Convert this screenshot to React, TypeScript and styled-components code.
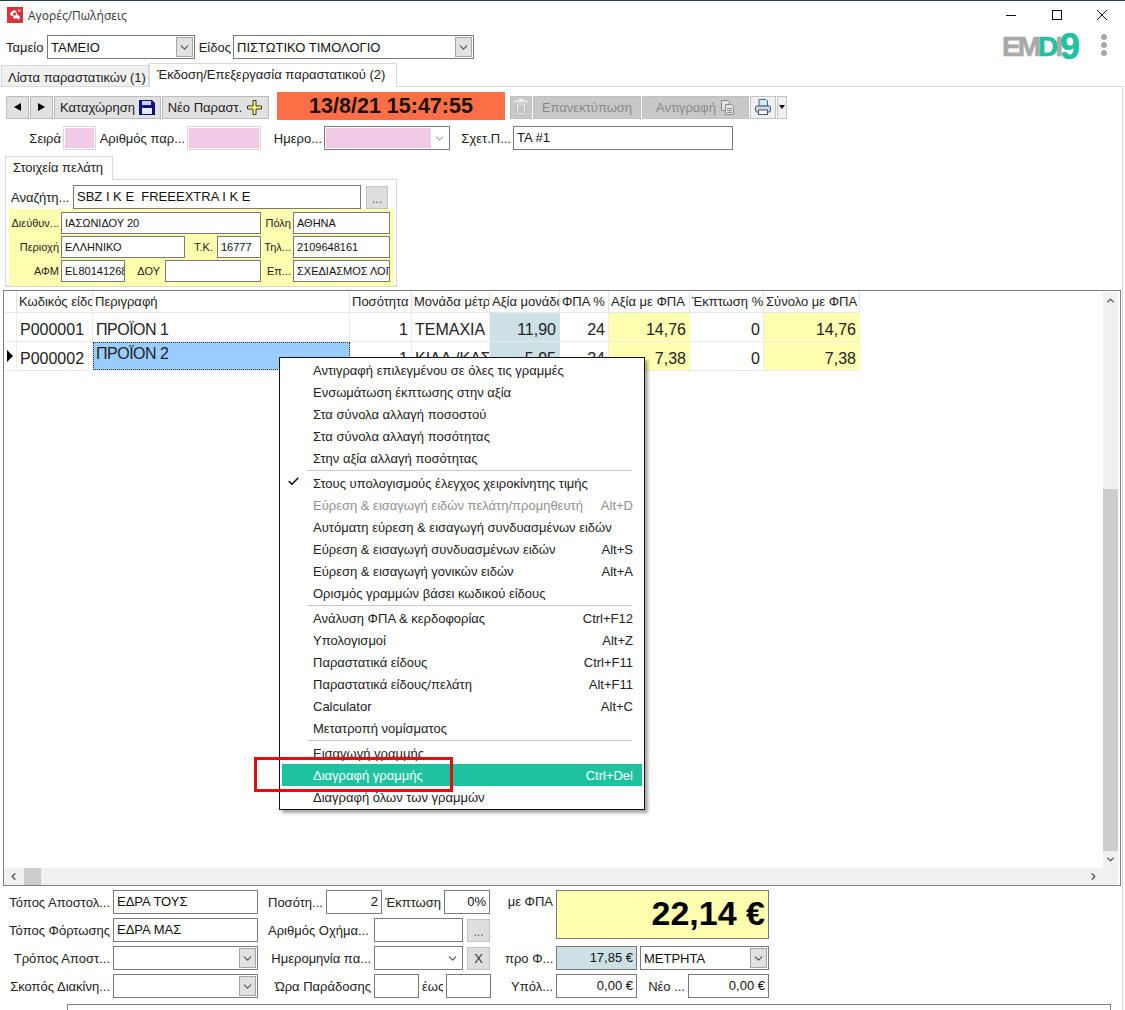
import React from 'react';
import styled, { createGlobalStyle } from 'styled-components';
import { ChevronDown, ChevronLeft, ChevronRight, ChevronUp, Check } from 'lucide-react';

const GlobalStyle = createGlobalStyle`
    html, body {
        margin: 0;
        padding: 0;
        background: #fff;
    }
    * {
        box-sizing: border-box;
    }
`;

const Root = styled.div`
    width: 1125px;
    height: 1010px;
    position: relative;
    overflow: hidden;
    background: #fff;
    border-top: 1px solid #1d4657;
    font-family: "Liberation Sans", Arial, sans-serif;
    font-size: 13px;
    color: #111;
    display: flex;
    flex-direction: column;
`;

const TitleBar = styled.div`
    height: 30px;
    flex: none;
    display: flex;
    align-items: center;
    padding: 0 0 2px 7px;
    gap: 5px;
    font-family: "Open Sans", sans-serif;
    font-size: 12px;
    color: #333;
`;

const WindowButtons = styled.div`
    margin-left: auto;
    display: flex;
    width: 120px;
    padding-right: 17px;
    justify-content: space-between;
    align-items: center;
`;

const TopRow = styled.div`
    height: 24px;
    flex: none;
    margin-top: 4px;
    padding-left: 6px;
    display: flex;
    align-items: center;
    gap: 2px;
`;

const Label = styled.div<{ $w?: number; $size?: number; $left?: boolean; $mr?: number }>`
    flex: none;
    width: ${p => (p.$w ? `${p.$w}px` : 'auto')};
    margin-right: ${p => p.$mr ?? 0}px;
    font-size: ${p => p.$size ?? 13}px;
    text-align: ${p => (p.$left ? 'left' : 'right')};
    white-space: nowrap;
    overflow: hidden;
    color: #222;
`;

const Box = styled.div<{ $w: number; $h?: number; $bg?: string; $size?: number; $right?: boolean }>`
    flex: none;
    width: ${p => p.$w}px;
    height: ${p => p.$h ?? 24}px;
    border: 1px solid #7a7a7a;
    background: ${p => p.$bg ?? '#fff'};
    font-size: ${p => p.$size ?? 13}px;
    line-height: ${p => (p.$h ?? 24) - 6}px;
    padding: 2px 3px 0;
    text-align: ${p => (p.$right ? 'right' : 'left')};
    white-space: pre;
    overflow: hidden;
    color: #111;
`;

const PinkBox = styled.div<{ $w: number }>`
    flex: none;
    width: ${p => p.$w}px;
    height: 24px;
    border: 1px solid #d9d9d9;
    background: #f3c9e8;
    box-shadow: inset 0 0 0 1px #fff;
`;

const Combo = styled.div<{ $w: number }>`
    flex: none;
    width: ${p => p.$w}px;
    height: 24px;
    border: 1px solid #7a7a7a;
    background: #fff;
    display: flex;
    align-items: stretch;
    padding: 1px;
    font-size: 13px;
    line-height: 22px;
    white-space: nowrap;
    overflow: hidden;
`;

const ComboText = styled.div<{ $bg?: string }>`
    flex: 1;
    padding-left: 2px;
    background: ${p => p.$bg ?? 'transparent'};
`;

const ComboButton = styled.div<{ $flat?: boolean }>`
    flex: none;
    width: 17px;
    display: flex;
    align-items: center;
    justify-content: center;
    background: ${p => (p.$flat ? 'transparent' : '#e1e1e1')};
    border: 1px solid ${p => (p.$flat ? 'transparent' : '#a6a6a6')};
    color: #555;
`;

const Logo = styled.div`
    margin-left: auto;
    width: 77px;
    margin-right: 20px;
    font-family: "Liberation Sans", Arial, sans-serif;
    font-weight: 700;
    font-size: 28px;
    letter-spacing: -3px;
    line-height: 24px;
    color: #a9a9a9;
    -webkit-text-stroke: 0.6px #a9a9a9;
    white-space: nowrap;
`;

const LogoD = styled.span`
    color: #1fc2a0;
    -webkit-text-stroke: 0.6px #1fc2a0;
`;

const LogoNine = styled.span`
    color: #1fc2a0;
    -webkit-text-stroke: 0.6px #1fc2a0;
    font-size: 36px;
    letter-spacing: 0;
    vertical-align: -3px;
`;

const Dots = styled.div`
    margin: 0 18px 4px 0;
    display: flex;
    flex-direction: column;
    gap: 2px;
`;

const Dot = styled.div`
    width: 6px;
    height: 6px;
    border-radius: 50%;
    background: #a6a6a6;
`;

const TabStrip = styled.div`
    height: 24px;
    flex: none;
    margin-top: 4px;
    display: flex;
    align-items: flex-end;
    padding-left: 1px;
    position: relative;
    z-index: 1;
    margin-bottom: -1px;
`;

const Tab = styled.div<{ $active?: boolean; $w: number }>`
    width: ${p => p.$w}px;
    height: ${p => (p.$active ? 24 : 22)}px;
    border: 1px solid #d9d9d9;
    border-bottom: ${p => (p.$active ? 'none' : '1px solid #d9d9d9')};
    background: ${p => (p.$active ? '#fff' : '#f0f0f0')};
    padding: ${p => (p.$active ? '3px 0 0 7px' : '4px 0 0 6px')};
    font-size: 13px;
    white-space: nowrap;
    color: #222;
`;

const Page = styled.div`
    flex: 1;
    width: 1123px;
    border: 1px solid #d9d9d9;
    border-left: none;
    border-bottom: none;
    display: flex;
    flex-direction: column;
`;

const Toolbar = styled.div`
    height: 28px;
    flex: none;
    margin-top: 5px;
    padding-left: 6px;
    display: flex;
    align-items: center;
    gap: 1px;
`;

const ToolButton = styled.div<{ $w: number; $off?: boolean }>`
    flex: none;
    width: ${p => p.$w}px;
    height: 23px;
    margin-top: 2px;
    background: ${p => (p.$off ? '#c8c8c8' : '#e1e1e1')};
    border: 1px solid ${p => (p.$off ? '#c0c0c0' : '#bcbcbc')};
    color: ${p => (p.$off ? '#8a8a8a' : '#222')};
    display: flex;
    align-items: center;
    justify-content: center;
    gap: 4px;
    font-size: 13px;
    white-space: nowrap;
`;

const PrintButton = styled(ToolButton)`
    background: #f0f0f0;
    border-color: #c4c4c4;
`;

const Triangle = styled.div<{ $dir: 'left' | 'right' | 'down' }>`
    width: 0;
    height: 0;
    ${p =>
        p.$dir === 'left'
            ? 'border-top: 4px solid transparent; border-bottom: 4px solid transparent; border-right: 7px solid #000;'
            : p.$dir === 'right'
            ? 'border-top: 4px solid transparent; border-bottom: 4px solid transparent; border-left: 7px solid #000;'
            : 'border-left: 3px solid transparent; border-right: 3px solid transparent; border-top: 4px solid #000;'}
`;

const RowPointer = styled.div`
    width: 0;
    height: 0;
    border-top: 6px solid transparent;
    border-bottom: 6px solid transparent;
    border-left: 6px solid #000;
`;

const DateBanner = styled.div`
    flex: none;
    width: 228px;
    height: 28px;
    margin: 0 4px 0 7px;
    background: #ff6f47;
    color: #1a1208;
    font-size: 21.5px;
    font-weight: 700;
    line-height: 28px;
    text-align: center;
`;

const DocRow = styled.div`
    height: 24px;
    flex: none;
    margin-top: 6px;
    display: flex;
    align-items: center;
    gap: 2px;
    padding-left: 29px;
`;

const CustomerTab = styled.div`
    flex: none;
    width: 108px;
    height: 24px;
    margin: 6px 0 -1px 5px;
    border: 1px solid #d9d9d9;
    border-bottom: none;
    background: #fff;
    padding: 3px 0 0 7px;
    position: relative;
    z-index: 1;
    color: #222;
`;

const CustomerPanel = styled.div`
    flex: none;
    width: 392px;
    height: 108px;
    margin-left: 5px;
    border: 1px solid #d9d9d9;
    border-bottom-width: 2px;
    padding: 5px 2px 0 3px;
`;

const SearchRow = styled.div`
    display: flex;
    align-items: center;
    height: 24px;
    padding-left: 2px;
`;

const DotsButton = styled.div<{ $w: number; $ml?: number }>`
    flex: none;
    width: ${p => p.$w}px;
    height: 23px;
    margin-left: ${p => p.$ml ?? 5}px;
    background: #dedede;
    border: 1px solid #c2c2c2;
    color: #555;
    text-align: center;
    font-size: 12px;
    line-height: 24px;
`;

const ClearButton = styled(DotsButton)`
    color: #333;
    font-size: 13px;
    line-height: 22px;
`;

const YellowArea = styled.div`
    height: 77px;
    background: #ffffb0;
    padding-top: 3px;
    display: flex;
    flex-direction: column;
    gap: 3px;
`;

const CustomerRow = styled.div`
    height: 21px;
    display: flex;
    align-items: center;
    gap: 2px;
`;

const GridBox = styled.div`
    flex: none;
    margin: 3px 0 0 3px;
    width: 1118px;
    height: 596px;
    border: 1px solid #808080;
    display: grid;
    grid-template-columns: 1fr 17px;
    grid-template-rows: 1fr 17px;
`;

const GridArea = styled.div`
    overflow: hidden;
    background: #fff;
`;

const Columns = '13px 76px 257px 62px 78px 70px 49px 81px 74px 96px';

const HeaderRow = styled.div`
    display: grid;
    grid-template-columns: ${Columns};
    height: 22px;
    width: 856px;
    border-bottom: 1px solid #e8e8e8;
`;

const HeadCell = styled.div`
    border-right: 1px solid #e4e4e4;
    padding: 4px 0 0 2px;
    font-size: 13px;
    line-height: 14px;
    white-space: nowrap;
    overflow: hidden;
    color: #222;
`;

const DataRow = styled.div`
    display: grid;
    grid-template-columns: ${Columns};
    height: 29px;
    width: 856px;
    border-bottom: 1px solid #ececec;
`;

const Cell = styled.div<{ $bg?: string; $right?: boolean }>`
    background: ${p => p.$bg ?? '#fff'};
    border-right: 1px solid ${p => p.$bg ?? '#ececec'};
    text-align: ${p => (p.$right ? 'right' : 'left')};
    padding: 7px 3px 0 3px;
    font-size: 16px;
    line-height: 20px;
    white-space: nowrap;
    overflow: hidden;
    color: #222;
`;

const DescCell = styled(Cell)`
    letter-spacing: -0.5px;
`;

const SelectedCell = styled(DescCell)`
    background: #99ccff;
    border: 1px dotted #333;
    padding: 1px 2px 0 2px;
`;

const RowMark = styled.div`
    border-right: 1px solid #ececec;
    display: flex;
    align-items: center;
    padding-left: 3px;
`;

const ScrollV = styled.div`
    background: #f0f0f0;
    margin: 1px 2px 0 0;
    display: flex;
    flex-direction: column;
    align-items: center;
    color: #555;
`;

const ArrowCap = styled.div`
    flex: none;
    height: 17px;
    display: flex;
    align-items: center;
    justify-content: center;
`;

const ScrollSpace = styled.div<{ $h: number }>`
    flex: none;
    height: ${p => p.$h}px;
`;

const ScrollThumbV = styled.div`
    flex: 1;
    width: 100%;
    background: #cdcdcd;
`;

const ScrollH = styled.div`
    background: #f0f0f0;
    display: flex;
    align-items: center;
    color: #555;
`;

const ScrollThumbH = styled.div`
    width: 17px;
    height: 100%;
    margin-left: 1px;
    background: #cdcdcd;
`;

const ArrowEnd = styled.div`
    margin-left: auto;
    width: 20px;
    display: flex;
    justify-content: center;
`;

const ArrowStart = styled.div`
    width: 19px;
    display: flex;
    justify-content: center;
`;

const ScrollCorner = styled.div`
    background: #f0f0f0;
    margin-right: 2px;
`;

const Footer = styled.div`
    flex: none;
    margin-top: 4px;
    display: flex;
    align-items: flex-start;
`;

const FootColumn = styled.div<{ $w: number }>`
    flex: none;
    width: ${p => p.$w}px;
    display: flex;
    flex-direction: column;
    gap: 4px;
`;

const FootRow = styled.div`
    height: 24px;
    display: flex;
    align-items: center;
    gap: 3px;
`;

const TotalRow = styled.div`
    height: 52px;
    display: flex;
    align-items: flex-start;
    gap: 3px;
`;

const TotalBox = styled.div`
    width: 213px;
    height: 49px;
    border: 1px solid #7a7a7a;
    background: #ffffb0;
    color: #000;
    font-size: 34px;
    font-weight: 700;
    line-height: 44px;
    text-align: right;
    padding-right: 3px;
    white-space: nowrap;
`;

const TotalLabel = styled(Label)`
    padding-top: 4px;
`;

const NotesBox = styled.div`
    flex: none;
    width: 1044px;
    height: 20px;
    margin: 6px 0 0 67px;
    border: 1px solid #808080;
`;

const Menu = styled.div`
    position: absolute;
    left: 279px;
    top: 356px;
    width: 366px;
    height: 453px;
    background: #fff;
    border: 1px solid #111;
    box-shadow: 3px 3px 3px rgba(0, 0, 0, 0.35);
    padding: 1px 2px;
    z-index: 5;
`;

const MenuItem = styled.div<{ $off?: boolean; $active?: boolean }>`
    height: 22px;
    position: relative;
    padding: 0 9px 0 31px;
    display: flex;
    justify-content: space-between;
    align-items: center;
    font-size: 13px;
    white-space: nowrap;
    background: ${p => (p.$active ? '#1fc2a0' : 'transparent')};
    color: ${p => (p.$active ? '#fff' : p.$off ? '#8f8f8f' : '#222')};
`;

const MenuSeparator = styled.div`
    height: 1px;
    margin: 1px 10px 1px 25px;
    background: #c8c8c8;
`;

const MenuCheck = styled.span`
    position: absolute;
    left: 5px;
    top: 3px;
    display: flex;
    color: #111;
`;

const RedFrame = styled.div`
    position: absolute;
    left: 254px;
    top: 756px;
    width: 199px;
    height: 35px;
    border: 3px solid #e01010;
    z-index: 6;
`;

type MenuEntry = { text?: string; key?: string; off?: boolean; active?: boolean; check?: boolean };

const menuItems: MenuEntry[] = [
    { text: 'Αντιγραφή επιλεγμένου σε όλες τις γραμμές' },
    { text: 'Ενσωμάτωση έκπτωσης στην αξία' },
    { text: 'Στα σύνολα αλλαγή ποσοστού' },
    { text: 'Στα σύνολα αλλαγή ποσότητας' },
    { text: 'Στην αξία αλλαγή ποσότητας' },
    {},
    { text: 'Στους υπολογισμούς έλεγχος χειροκίνητης τιμής', check: true },
    { text: 'Εύρεση & εισαγωγή ειδών πελάτη/προμηθευτή', key: 'Alt+D', off: true },
    { text: 'Αυτόματη εύρεση & εισαγωγή συνδυασμένων ειδών' },
    { text: 'Εύρεση & εισαγωγή συνδυασμένων ειδών', key: 'Alt+S' },
    { text: 'Εύρεση & εισαγωγή γονικών ειδών', key: 'Alt+A' },
    { text: 'Ορισμός γραμμών βάσει κωδικού είδους' },
    {},
    { text: 'Ανάλυση ΦΠΑ & κερδοφορίας', key: 'Ctrl+F12' },
    { text: 'Υπολογισμοί', key: 'Alt+Z' },
    { text: 'Παραστατικά είδους', key: 'Ctrl+F11' },
    { text: 'Παραστατικά είδους/πελάτη', key: 'Alt+F11' },
    { text: 'Calculator', key: 'Alt+C' },
    { text: 'Μετατροπή νομίσματος' },
    {},
    { text: 'Εισαγωγή γραμμής' },
    { text: 'Διαγραφή γραμμής', key: 'Ctrl+Del', active: true },
    { text: 'Διαγραφή όλων των γραμμών' },
];

const headers = ['Κωδικός είδους', 'Περιγραφή', 'Ποσότητα', 'Μονάδα μέτρησης', 'Αξία μονάδας', 'ΦΠΑ %', 'Αξία με ΦΠΑ', 'Έκπτωση %', 'Σύνολο με ΦΠΑ'];

const YELLOW = '#ffffb0';
const STEEL = '#cde0e6';

function AppIcon() {
    return (
        <svg width="16" height="16" viewBox="0 0 16 16">
            <rect width="16" height="16" fill="#d9343a" />
            <path d="M3 6l4-3 2 1 1 3 3 3-1 3-3-2-2 1-1-3-3-1z" fill="#fff" />
            <circle cx="7.5" cy="7" r="1.6" fill="#d9343a" />
            <path d="M11 3l2 2M12 2.5l1.5 1.5" stroke="#fff" />
        </svg>
    );
}

function SaveIcon() {
    return (
        <svg width="16" height="16" viewBox="0 0 16 16">
            <path d="M0 1h13l3 3v12H0z" fill="#10107a" />
            <rect x="3" y="2" width="9" height="4" fill="#c8d4f4" />
            <rect x="3" y="9" width="10" height="6" fill="#e8ecfa" />
        </svg>
    );
}

function PlusIcon() {
    return (
        <svg width="17" height="17" viewBox="0 0 17 17">
            <path d="M7 1.5h3v5.5h5.5v3H10v5.5H7V10H1.5V7H7z" fill="#ffff70" stroke="#333" strokeWidth="1" />
        </svg>
    );
}

function TrashIcon() {
    return (
        <svg width="16" height="18" viewBox="0 0 16 18">
            <path d="M6 1.5h4M1.5 3.5h13" stroke="#eee" strokeWidth="2" />
            <path d="M3 5h10l-1 12H4z" fill="#eee" stroke="#9a9a9a" strokeWidth="0.6" />
            <path d="M6 6.5v9M8 6.5v9M10 6.5v9" stroke="#9a9a9a" />
        </svg>
    );
}

function CopyIcon() {
    return (
        <svg width="15" height="16" viewBox="0 0 15 16" fill="#e4e4e4" stroke="#8c8c8c">
            <path d="M1.5 1.5h6l2 2v8h-8z" />
            <path d="M5.5 5.5h6l2 2v8h-8z" />
            <path d="M7 9.5h5M7 11.5h5M7 13.5h5" />
        </svg>
    );
}

function PrinterIcon() {
    return (
        <svg width="18" height="18" viewBox="0 0 18 18">
            <path d="M5 8V1.5h7l1.5 1.5v5z" fill="#d8e8f8" stroke="#3f6c9c" />
            <rect x="1.5" y="8" width="15" height="6" rx="1.5" fill="#cfd6e0" stroke="#46586e" />
            <rect x="4.5" y="12" width="9" height="4.5" fill="#fff" stroke="#46586e" />
        </svg>
    );
}

function App() {
    return (
        <Root>
            <GlobalStyle />
            <TitleBar>
                <AppIcon />
                Αγορές/Πωλήσεις
                <WindowButtons>
                    <svg width="12" height="12" viewBox="0 0 12 12"><path d="M1 6.5h10" stroke="#111" /></svg>
                    <svg width="12" height="12" viewBox="0 0 12 12"><rect x="1.5" y="1.5" width="9" height="9" fill="none" stroke="#111" /></svg>
                    <svg width="12" height="12" viewBox="0 0 12 12"><path d="M1 1l10 10M11 1L1 11" stroke="#111" /></svg>
                </WindowButtons>
            </TitleBar>

            <TopRow>
                <Label $w={39} $left>Ταμείο</Label>
                <Combo $w={148}>
                    <ComboText>ΤΑΜΕΙΟ</ComboText>
                    <ComboButton><ChevronDown size={13} /></ComboButton>
                </Combo>
                <Label $w={34}>Είδος</Label>
                <Combo $w={241}>
                    <ComboText>ΠΙΣΤΩΤΙΚΟ ΤΙΜΟΛΟΓΙΟ</ComboText>
                    <ComboButton><ChevronDown size={13} /></ComboButton>
                </Combo>
                <Logo>EM<LogoD>D</LogoD>I<LogoNine>9</LogoNine></Logo>
                <Dots><Dot /><Dot /><Dot /></Dots>
            </TopRow>

            <TabStrip>
                <Tab $w={148}>Λίστα παραστατικών (1)</Tab>
                <Tab $w={248} $active>Έκδοση/Επεξεργασία παραστατικού (2)</Tab>
            </TabStrip>

            <Page>
                <Toolbar>
                    <ToolButton $w={23}><Triangle $dir="left" /></ToolButton>
                    <ToolButton $w={23}><Triangle $dir="right" /></ToolButton>
                    <ToolButton $w={107}>Καταχώρηση <SaveIcon /></ToolButton>
                    <ToolButton $w={107}>Νέο Παραστ. <PlusIcon /></ToolButton>
                    <DateBanner>13/8/21 15:47:55</DateBanner>
                    <ToolButton $w={22} $off><TrashIcon /></ToolButton>
                    <ToolButton $w={108} $off>Επανεκτύπωση</ToolButton>
                    <ToolButton $w={107} $off>Αντιγραφή <CopyIcon /></ToolButton>
                    <PrintButton $w={26}><PrinterIcon /></PrintButton>
                    <PrintButton $w={10}><Triangle $dir="down" /></PrintButton>
                </Toolbar>

                <DocRow>
                    <Label $w={32}>Σειρά</Label>
                    <PinkBox $w={33} />
                    <Label $w={87}>Αριθμός παρ...</Label>
                    <PinkBox $w={74} />
                    <Label $w={59}>Ημερο...</Label>
                    <Combo $w={126}>
                        <ComboText $bg="#f3c9e8" />
                        <ComboButton $flat><ChevronDown size={13} color="#aaa" /></ComboButton>
                    </Combo>
                    <Label $w={59}>Σχετ.Π...</Label>
                    <Box $w={220}>ΤΑ #1</Box>
                </DocRow>

                <CustomerTab>Στοιχεία πελάτη</CustomerTab>
                <CustomerPanel>
                    <SearchRow>
                        <Label $w={62} $left>Αναζήτη...</Label>
                        <Box $w={288}>SBZ I K E  FREEEXTRA I K E</Box>
                        <DotsButton $w={22}>...</DotsButton>
                    </SearchRow>
                    <YellowArea>
                        <CustomerRow>
                            <Label $w={50} $size={11}>Διεύθυν...</Label>
                            <Box $w={200} $h={22} $size={11}>ΙΑΣΩΝΙΔΟΥ 20</Box>
                            <Label $w={28} $size={11}>Πόλη</Label>
                            <Box $w={97} $h={22} $size={11}>ΑΘΗΝΑ</Box>
                        </CustomerRow>
                        <CustomerRow>
                            <Label $w={50} $size={11}>Περιοχή</Label>
                            <Box $w={124} $h={22} $size={11}>ΕΛΛΗΝΙΚΟ</Box>
                            <Label $w={26} $mr={2} $size={11}>Τ.Κ.</Label>
                            <Box $w={44} $h={22} $size={11}>16777</Box>
                            <Label $w={28} $size={11}>Τηλ...</Label>
                            <Box $w={97} $h={22} $size={11}>2109648161</Box>
                        </CustomerRow>
                        <CustomerRow>
                            <Label $w={50} $size={11}>ΑΦΜ</Label>
                            <Box $w={64} $h={22} $size={11}>EL80141268</Box>
                            <Label $w={33} $mr={3} $size={11}>ΔΟΥ</Label>
                            <Box $w={96} $h={22} $size={11} />
                            <Label $w={28} $size={11}>Επ...</Label>
                            <Box $w={97} $h={22} $size={11}>ΣΧΕΔΙΑΣΜΟΣ ΛΟΓ</Box>
                        </CustomerRow>
                    </YellowArea>
                </CustomerPanel>

                <GridBox>
                    <GridArea>
                        <HeaderRow>
                            <HeadCell />
                            {headers.map(h => <HeadCell key={h}>{h}</HeadCell>)}
                        </HeaderRow>
                        <DataRow>
                            <RowMark />
                            <Cell>P000001</Cell>
                            <DescCell>ΠΡΟΪΟΝ 1</DescCell>
                            <Cell $right>1</Cell>
                            <Cell>ΤΕΜΑΧΙΑ</Cell>
                            <Cell $right $bg={STEEL}>11,90</Cell>
                            <Cell $right>24</Cell>
                            <Cell $right $bg={YELLOW}>14,76</Cell>
                            <Cell $right>0</Cell>
                            <Cell $right $bg={YELLOW}>14,76</Cell>
                        </DataRow>
                        <DataRow>
                            <RowMark><RowPointer /></RowMark>
                            <Cell>P000002</Cell>
                            <SelectedCell>ΠΡΟΪΟΝ 2</SelectedCell>
                            <Cell $right>1</Cell>
                            <Cell>ΚΙΛΑ /ΚΑΣ</Cell>
                            <Cell $right $bg={STEEL}>5,95</Cell>
                            <Cell $right>24</Cell>
                            <Cell $right $bg={YELLOW}>7,38</Cell>
                            <Cell $right>0</Cell>
                            <Cell $right $bg={YELLOW}>7,38</Cell>
                        </DataRow>
                    </GridArea>
                    <ScrollV>
                        <ArrowCap><ChevronUp size={11} strokeWidth={3} /></ArrowCap>
                        <ScrollSpace $h={180} />
                        <ScrollThumbV />
                        <ArrowCap><ChevronDown size={11} strokeWidth={3} /></ArrowCap>
                    </ScrollV>
                    <ScrollH>
                        <ArrowStart><ChevronLeft size={11} strokeWidth={3} /></ArrowStart>
                        <ScrollThumbH />
                        <ArrowEnd><ChevronRight size={11} strokeWidth={3} /></ArrowEnd>
                    </ScrollH>
                    <ScrollCorner />
                </GridBox>

                <Footer>
                    <FootColumn $w={268}>
                        <FootRow>
                            <Label $w={110}>Τόπος Αποστολ...</Label>
                            <Box $w={145}>ΕΔΡΑ ΤΟΥΣ</Box>
                        </FootRow>
                        <FootRow>
                            <Label $w={110}>Τόπος Φόρτωσης</Label>
                            <Box $w={145}>ΕΔΡΑ ΜΑΣ</Box>
                        </FootRow>
                        <FootRow>
                            <Label $w={110}>Τρόπος Αποστ...</Label>
                            <Combo $w={145}>
                                <ComboText />
                                <ComboButton><ChevronDown size={13} /></ComboButton>
                            </Combo>
                        </FootRow>
                        <FootRow>
                            <Label $w={110}>Σκοπός Διακίνη...</Label>
                            <Combo $w={145}>
                                <ComboText />
                                <ComboButton><ChevronDown size={13} /></ComboButton>
                            </Combo>
                        </FootRow>
                    </FootColumn>

                    <FootColumn $w={237}>
                        <FootRow>
                            <Label $w={55} $left>Ποσότη...</Label>
                            <Box $w={56} $right>2</Box>
                            <Label $w={56}>Έκπτωση</Label>
                            <Box $w={46} $right>0%</Box>
                        </FootRow>
                        <FootRow>
                            <Label $w={103} $left>Αριθμός Οχήμα...</Label>
                            <Box $w={89} />
                            <DotsButton $w={23} $ml={1}>...</DotsButton>
                        </FootRow>
                        <FootRow>
                            <Label $w={103}>Ημερομηνία πα...</Label>
                            <Combo $w={89}>
                                <ComboText />
                                <ComboButton $flat><ChevronDown size={13} /></ComboButton>
                            </Combo>
                            <ClearButton $w={23} $ml={1}>Χ</ClearButton>
                        </FootRow>
                        <FootRow>
                            <Label $w={103}>Ώρα Παράδοσης</Label>
                            <Box $w={45} />
                            <Label $w={21}>έως</Label>
                            <Box $w={45} />
                        </FootRow>
                    </FootColumn>

                    <FootColumn $w={270}>
                        <TotalRow>
                            <TotalLabel $w={48}>με ΦΠΑ</TotalLabel>
                            <TotalBox>22,14 €</TotalBox>
                        </TotalRow>
                        <FootRow>
                            <Label $w={48}>προ Φ...</Label>
                            <Box $w={81} $bg={STEEL} $right>17,85 €</Box>
                            <Combo $w={129}>
                                <ComboText>ΜΕΤΡΗΤΑ</ComboText>
                                <ComboButton><ChevronDown size={13} /></ComboButton>
                            </Combo>
                        </FootRow>
                        <FootRow>
                            <Label $w={48}>Υπόλ...</Label>
                            <Box $w={81} $right>0,00 €</Box>
                            <Label $w={45}>Νέο ...</Label>
                            <Box $w={81} $right>0,00 €</Box>
                        </FootRow>
                    </FootColumn>
                </Footer>

                <NotesBox />
            </Page>

            <Menu>
                {menuItems.map((m, i) =>
                    m.text ? (
                        <MenuItem key={i} $off={m.off} $active={m.active}>
                            {m.check && <MenuCheck><Check size={13} strokeWidth={3} /></MenuCheck>}
                            <span>{m.text}</span>
                            {m.key && <span>{m.key}</span>}
                        </MenuItem>
                    ) : (
                        <MenuSeparator key={i} />
                    )
                )}
            </Menu>
            <RedFrame />
        </Root>
    );
}

export default App;
